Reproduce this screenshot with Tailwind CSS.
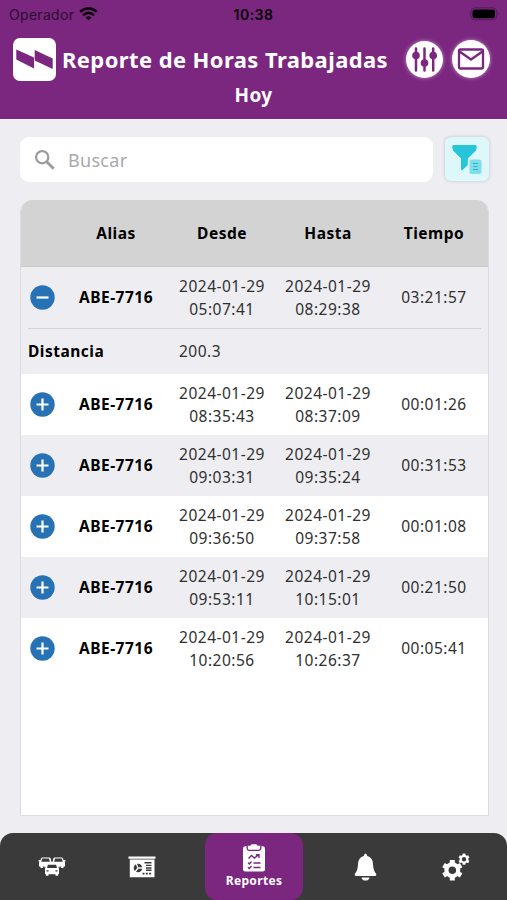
<!DOCTYPE html>
<html lang="es">
<head>
<meta charset="utf-8">
<title>Reporte de Horas Trabajadas</title>
<script src="https://cdn.jsdelivr.net/npm/@tailwindcss/browser@4"></script>
</head>
<body class="w-[507px] h-[900px] overflow-hidden bg-[#eeeef2] font-['Noto_Sans','Open_Sans',sans-serif] text-black flex flex-col">
<header class="h-[119px] shrink-0 bg-[#7b267f] flex flex-col">
  <div class="h-[28px] grid grid-cols-3 items-center font-['Inter','Liberation_Sans',sans-serif] text-[14px] text-black">
    <div class="flex items-center gap-[5px] pl-[9px] text-[#2c0d2e] tracking-[0.3px]"><span>Operador</span>
      <svg class="w-[19px] h-[14px]" viewBox="0 0 19 14" fill="none" stroke="#100411" stroke-width="2.7"><path d="M1 4.8Q9.500-2.200 18 4.800M4 8.200Q9.500 3.600 15 8.200"/><path d="M6.500 10.400Q9.500 7.900 12.500 10.400L9.500 13.500Z" fill="#100411" stroke="none"/></svg>
    </div>
    <div class="text-center font-semibold tracking-[0.5px]">10:38</div>
    <div class="flex justify-end items-center pr-[7px]">
      <svg class="w-[30px] h-[14px]" viewBox="0 0 30 14"><rect x=".8" y=".8" width="26" height="12" rx="4" fill="none" stroke="#561b59"/><rect x="2.500" y="2.500" width="22.500" height="8.700" rx="2.300" fill="#000"/><path d="M28.500 5v4q1.400-2 0-4" fill="#561b59"/></svg>
    </div>
  </div>
  <div class="h-[62px] flex items-center pl-[13px] pr-[17px]">
    <div class="w-[43px] h-[43px] bg-white rounded-[7px] shrink-0">
      <svg class="w-[43px] h-[43px]" viewBox="0 0 43 43" fill="#7b267f"><path d="M3.300 11.400L21 19.600V30.400L3.300 21.600ZM21.700 12L39.700 20.600V31L21.700 22.400Z"/></svg>
    </div>
    <h1 class="pl-[6px] text-[22px] font-bold text-white tracking-[0.4px] whitespace-nowrap w-[350px]">Reporte de Horas Trabajadas</h1>
    <div class="flex gap-[9px] items-center ml-auto">
      <div class="w-[37px] h-[37px] rounded-full bg-white shadow-[0_0_4px_rgba(255,255,255,.5)]">
        <svg class="w-[37px] h-[37px]" viewBox="0 0 37 37" fill="#7b267f" stroke="#7b267f" stroke-width="2.500" stroke-linecap="round"><path d="M10 7.500V29.500M18.500 7.500V29.500M27.200 7.500V29.500"/><g stroke="none"><circle cx="10" cy="14.500" r="3.800"/><circle cx="18.500" cy="22" r="3.800"/><circle cx="27.200" cy="14.500" r="3.800"/></g></svg>
      </div>
      <div class="w-[38px] h-[38px] rounded-full bg-white shadow-[0_0_4px_rgba(255,255,255,.5)]">
        <svg class="w-[38px] h-[38px]" viewBox="0 0 38 38" fill="none" stroke="#7b267f" stroke-width="2.300" stroke-linejoin="round"><rect x="7" y="9.500" width="24" height="19" rx="1.500"/><path d="M7.500 11.500L19 19.500L30.500 11.500"/></svg>
      </div>
    </div>
  </div>
  <div class="text-center text-[19px] leading-[26px] -mt-[8px] font-bold text-white tracking-[0.3px]">Hoy</div>
</header>
<main class="flex flex-col pl-[20px] pt-[18px] grow">
  <div class="flex">
    <div class="w-[413px] h-[45px] bg-white rounded-[9px] flex items-center pl-[14px]">
      <svg class="w-[22px] h-[22px]" viewBox="0 0 22 22" fill="none" stroke="#9b9b9b" stroke-width="2.200"><circle cx="8.200" cy="8.200" r="6.100"/><path d="M12.700 12.700L19.700 19.700" stroke-width="2.800"/></svg>
      <span class="ml-[12px] pt-[2px] text-[18px] text-[#a9a9a9] tracking-[0.3px]">Buscar</span>
    </div>
    <div class="ml-[12px] w-[44px] h-[44px] rounded-[6px] bg-[#def7fa] shadow-[0_0_3px_1px_#d2d4dc]">
      <svg class="w-[44px] h-[44px]" viewBox="0 0 44 44"><path d="M8.500 8h22q1.500 0 1.200 2.500L31 13.500L22.800 21.500V28L17.500 33Q16 33.500 16 32V21.500L8 13.500L7.400 10.500Q7 8 8.500 8Z" fill="#26c5da"/><rect x="24.500" y="22.500" width="12" height="14.500" rx="2" fill="#80deea"/><path d="M28 26.500H33M28.500 29.500H32.500M28 32.500H33" stroke="#26b5cb" stroke-width="1.200"/></svg>
    </div>
  </div>
  <section class="mt-[18px] w-[469px] h-[616px] bg-white rounded-t-[12px] overflow-hidden border-x border-b border-[#dcdce0]">
    <div class="h-[67px] -mx-px pt-[2px] pl-[43px] pr-[2px] grid grid-cols-4 items-center text-center bg-[#d3d3d3] border-b border-[#cacaca] text-[15.5px] font-bold tracking-[0.5px]">
      <div>Alias</div><div>Desde</div><div>Hasta</div><div>Tiempo</div>
    </div>
    <div id="rows"></div>
  </section>
</main>
<nav class="h-[67px] shrink-0 bg-[#3a3a3a] rounded-t-[13px] flex items-center relative">
  <div class="w-[104px] flex justify-center">
    <svg class="w-[28px] h-[20px]" viewBox="0 0 28 20"><g fill="#fff"><path d="M3 1.500Q3.300.5 4.300.5h7Q12.300.5 12.700 1.500L13.300 4.500L14 5V9.500H12.500V11H10V9.500H5V11H2.500V9.500H1V5L2 4.500H.6V3H2.600Z"/><path d="M25 1.500Q24.700.5 23.700.5h-7Q15.700.5 15.300 1.500L14.700 4.500L14 5V9.500H15.500V11H18V9.500H23V11H25.500V9.500H27V5L26 4.500H27.400V3H25.400Z"/></g><path d="M4.200 1.600h6.800l.9 3.200H3.300ZM17 1.600h6.800l.9 3.200h-8.600Z" fill="#3a3a3a"/><path d="M8.700 7Q9 6 10 6h8Q19 6 19.300 7L20 10.500L21 11.500V17.200H20V18.700H17.500V17.200H10.500V18.700H8V17.200H7V11.500L8 10.500H6.500V8.800H8.300ZM19.700 8.800H21.500V10.500H20Z" fill="#fff"/><path d="M9.800 7.700h8.400l.7 3.300H9.100ZM8.500 13.200h2v1.400h-2ZM17.500 13.200h2v1.400h-2Z" fill="#3a3a3a"/></svg>
  </div>
  <div class="w-[76px] flex justify-center">
    <svg class="w-[28px] h-[22px]" viewBox="0 0 28 22"><path d="M.5.5h27v2.200H.5ZM1.800 3.500H26.500V21.300H1.800Z" fill="#fff"/><circle cx="10" cy="12" r="4.300" fill="#3a3a3a"/><path d="M10 12L8.200 7.600M10 12H15M10 12L7 16" stroke="#fff" stroke-width="1.300"/><path d="M16.500 6.800H23.500M18 9.400H23.500M18 12H23.500M18 14.300H23.500" stroke="#3a3a3a" stroke-width="1.400"/><path d="M14.500 17.700H23.500" stroke="#3a3a3a" stroke-width="1.800" stroke-dasharray="2 1.300"/></svg>
  </div>
  <div class="ml-[25px] w-[98px] h-[67px] rounded-[12px] bg-[#7b267f] flex flex-col items-center pt-[11px]">
    <svg class="w-[24px] h-[28px] shrink-0" viewBox="0 0 24 28"><rect x="1" y="2.300" width="22" height="25.200" rx="2.300" fill="#fff"/><path d="M5.200 1.800V4.500Q5.200 6.300 7 6.300H17Q18.800 6.300 18.800 4.500V1.800" fill="#fff" stroke="#7b267f" stroke-width="1.300"/><rect x="8.500" y=".2" width="7" height="3.500" rx="1.500" fill="#fff"/><path d="M6.500 14.500L9.500 11.500L12.500 14L16.500 10.700M13.800 10.800H17V14M6 18.800L7.300 20L9.500 17.500M11.500 19H18.500M6 23.300L7.300 24.500L9.500 22M11.500 23.500H18.500" fill="none" stroke="#7b267f" stroke-width="1.400"/></svg>
    <span class="text-[12px] leading-[17px] font-bold text-white tracking-[0.35px]">Reportes</span>
  </div>
  <div class="w-[125px] flex justify-center">
    <svg class="w-[23px] h-[28px]" viewBox="0 0 23 28" fill="#fff"><path d="M11.500.5Q13 .5 13.200 3Q18.800 4.500 19 11Q19.200 18 22.300 21Q22.500 23 21 23H2Q.5 23 .7 21Q3.800 18 4 11Q4.200 4.500 9.800 3Q10 .5 11.500.5ZM7.500 24.500h8Q15 27.600 11.500 27.600T7.500 24.500Z"/></svg>
  </div>
  <div class="w-[56px] flex justify-center">
    <svg class="w-[28px] h-[28px]" viewBox="0 0 28 28" fill="none" stroke="#fff"><circle cx="10.300" cy="17.200" r="5.900" stroke-width="4.200"/><path d="M10.300 7V10M10.300 24.300V27.400M1.500 12.100L4.100 13.600M16.500 20.800L19.100 22.300M1.500 22.300L4.100 20.800M16.500 13.600L19.100 12.100" stroke-width="5"/><circle cx="22" cy="6.200" r="3.300" stroke-width="2.200"/><path d="M22 .6V2.500M22 9.900V11.800M17.200 3.400L18.800 4.300M25.200 8.100L26.800 9M17.200 9L18.800 8.100M25.200 4.300L26.800 3.400" stroke-width="2.700"/></svg>
  </div>
</nav>
<script>
const data = [
  ['05:07:41','08:29:38','03:21:57','200.3'],
  ['08:35:43','08:37:09','00:01:26'],
  ['09:03:31','09:35:24','00:31:53'],
  ['09:36:50','09:37:58','00:01:08'],
  ['09:53:11','10:15:01','00:21:50'],
  ['10:20:56','10:26:37','00:05:41']
];
document.getElementById('rows').innerHTML = data.map(([from, to, total, distance], i) => `
  <div class="${i % 2 === 0 ? 'bg-[#eeeef2]' : 'bg-white'} text-[15.5px] tracking-[0.5px] text-[#303030]">
    <div class="h-[61px] grid grid-cols-[42px_106px_106px_106px_106px] items-center text-center leading-[23px]">
      <svg class="w-[25px] h-[25px] ml-[9px]" viewBox="0 0 25 25"><circle cx="12.500" cy="12.500" r="12.200" fill="#2772b5"/><path d="${distance ? 'M6.500 12.500H18.500' : 'M6.500 12.500H18.500M12.500 6.500V18.500'}" stroke="#fff" stroke-width="2.200"/></svg>
      <div class="font-bold text-black tracking-[0.5px]">ABE-7716</div>
      <div>2024-01-29<br>${from}</div>
      <div>2024-01-29<br>${to}</div>
      <div>${total}</div>
    </div>
    ${distance ? `<div class="h-[46px] mx-[7px] border-t border-[#d3d3d6] flex items-center"><div class="w-[151px] font-bold text-black">Distancia</div><div>${distance}</div></div>` : ''}
  </div>`).join('');
</script>
</body>
</html>
